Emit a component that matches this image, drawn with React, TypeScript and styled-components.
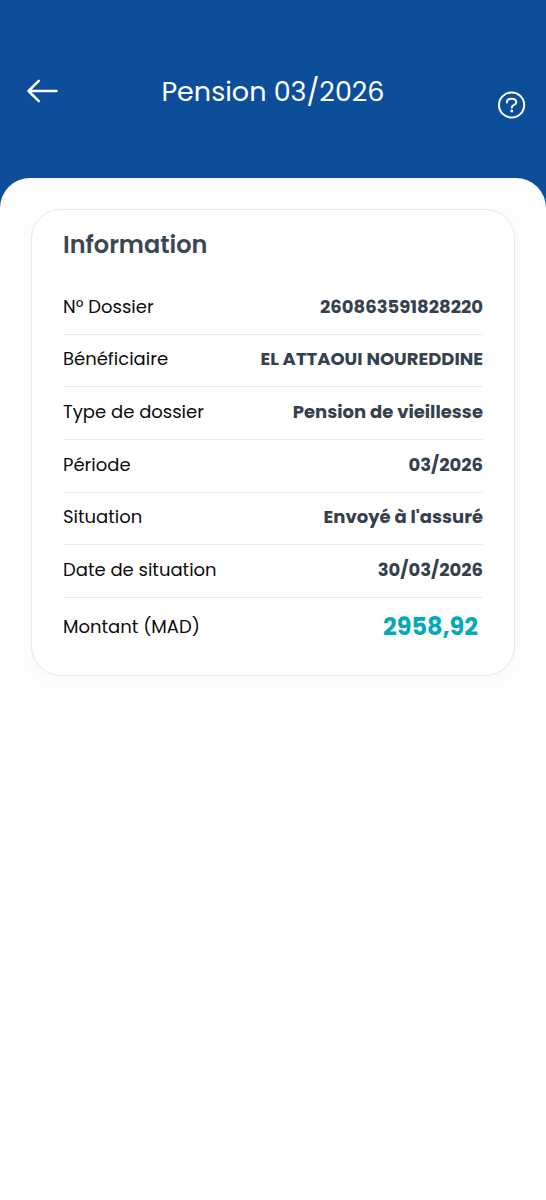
import React from "react";
import styled, { createGlobalStyle } from "styled-components";

const GlobalStyle = createGlobalStyle`
  * { box-sizing: border-box; }
  body {
    margin: 0;
    background: #fefefe;
    font-family: Poppins, Inter, "Liberation Sans", sans-serif;
    color: #0c0c0c;
  }
`;

const Page = styled.div`
  min-height: 100vh;
  display: flex;
  flex-direction: column;
  background: #0d4e9a;
`;

const Header = styled.header`
  padding: 68px 16px 36px;
  display: grid;
  grid-template-columns: 52px 1fr 52px;
  align-items: start;
`;

const Title = styled.h1`
  margin: 0;
  font-size: 27px;
  line-height: 48px;
  font-weight: 400;
  text-align: center;
  color: #fff;
`;

const IconButton = styled.button<{ $low?: boolean }>`
  display: flex;
  align-items: center;
  justify-content: ${(p) => (p.$low ? "flex-end" : "center")};
  width: 52px;
  height: ${(p) => (p.$low ? "74px" : "46px")};
  padding: ${(p) => (p.$low ? "0 4px 0 0" : "0")};
  border: 0;
  background: none;
  color: #fff;
  cursor: pointer;
`;

const Sheet = styled.main`
  flex: 1;
  padding: 31px;
  border-radius: 30px 30px 0 0;
  background: #fdfdfd;
`;

const BottomBar = styled.footer`
  height: 72px;
  background: #fefefe;
`;

const Card = styled.section`
  padding: 16px 31px 27px;
  border: 1px solid #e8e8ea;
  border-radius: 30px;
  background: #fff;
  box-shadow: 0 4px 12px rgba(0, 0, 0, 0.02);
`;

const CardTitle = styled.h2`
  margin: 0 0 18px;
  font-size: 24px;
  line-height: 38px;
  font-weight: 600;
  color: #3b4854;
`;

const Details = styled.dl`
  margin: 0;
  display: grid;
  grid-template-rows: repeat(6, 1fr) 50px;
  height: 366px;
`;

const Row = styled.div`
  display: flex;
  align-items: center;
  justify-content: space-between;
  gap: 12px;
  padding-bottom: 2px;
  border-bottom: 1px solid #ececee;
`;

const TotalRow = styled(Row)`
  padding: 8px 5px 0 0;
  border-bottom: 0;
`;

const Label = styled.dt`
  font-size: 18px;
  line-height: 28px;
  white-space: nowrap;
`;

const Value = styled.dd`
  margin: 0;
  font-size: 18px;
  line-height: 28px;
  font-weight: 700;
  text-align: right;
  color: #35414d;
`;

const Amount = styled(Value)`
  font-size: 24px;
  color: #05a9bb;
`;

const rows = [
  ["Nº Dossier", "260863591828220"],
  ["Bénéficiaire", "EL ATTAOUI NOUREDDINE"],
  ["Type de dossier", "Pension de vieillesse"],
  ["Période", "03/2026"],
  ["Situation", "Envoyé à l'assuré"],
  ["Date de situation", "30/03/2026"],
];

const BackIcon = () => (
  <svg width="32" height="24" viewBox="0 0 32 24" fill="none" stroke="currentColor" strokeWidth="2.5" strokeLinecap="round" strokeLinejoin="round" aria-hidden="true">
    <path d="M30.500 12H2.500M12.800 1.900 2.500 12l10.300 10.100" />
  </svg>
);

const HelpIcon = () => (
  <svg width="28" height="28" viewBox="0 0 28 28" fill="none" stroke="currentColor" strokeWidth="2" strokeLinecap="round" strokeLinejoin="round" aria-hidden="true">
    <circle cx="13.600" cy="14" r="12.600" />
    <path d="M8.900 11.400c0-2.300 2-3.700 4.700-3.700s4.700 1.400 4.700 3.700c0 2.700-4.500 2.400-4.500 5" />
    <circle cx="13.800" cy="20" r="1.400" fill="currentColor" stroke="none" />
  </svg>
);

export default function App() {
  return (
    <>
      <GlobalStyle />
      <Page>
        <Header>
          <IconButton type="button" aria-label="Retour">
            <BackIcon />
          </IconButton>
          <Title>Pension 03/2026</Title>
          <IconButton type="button" aria-label="Aide" $low>
            <HelpIcon />
          </IconButton>
        </Header>
        <Sheet>
          <Card>
            <CardTitle>Information</CardTitle>
            <Details>
              {rows.map(([label, value]) => (
                <Row key={label}>
                  <Label>{label}</Label>
                  <Value>{value}</Value>
                </Row>
              ))}
              <TotalRow>
                <Label>Montant (MAD)</Label>
                <Amount>2958,92</Amount>
              </TotalRow>
            </Details>
          </Card>
        </Sheet>
        <BottomBar />
      </Page>
    </>
  );
}
